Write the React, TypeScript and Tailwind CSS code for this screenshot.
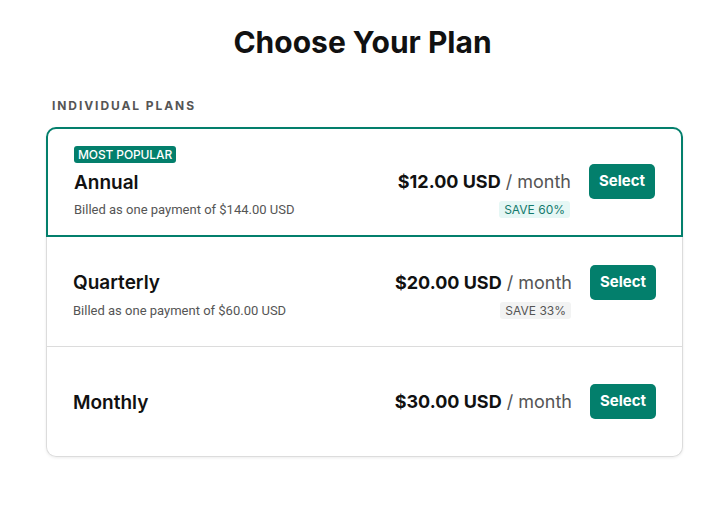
import React from 'react';

interface Plan {
  name: string;
  billed?: string;
  price: string;
  save?: string;
  popular?: boolean;
}

const plans: Plan[] = [
  { name: 'Annual', billed: 'Billed as one payment of $144.00 USD', price: '$12.00 USD', save: 'SAVE 60%', popular: true },
  { name: 'Quarterly', billed: 'Billed as one payment of $60.00 USD', price: '$20.00 USD', save: 'SAVE 33%' },
  { name: 'Monthly', price: '$30.00 USD' },
];

function PlanRow({ plan }: { plan: Plan }) {
  return (
    <div className="flex h-full items-center px-[26px]">
      <div className="flex w-full items-end justify-between">
        {/* Left: name + billing */}
        <div className="flex flex-col">
          {plan.popular && (
            <span className="mb-[1px] self-start rounded-[3px] bg-[#037f6c] px-[4px] text-[12px] font-medium leading-[17px] tracking-[-0.01em] text-white">
              MOST POPULAR
            </span>
          )}
          <div className="flex h-[35px] items-center pt-[3px] text-[19px] font-semibold text-[#111]">{plan.name}</div>
          {plan.billed && (
            <div className="mt-[2px] font-['Roboto',sans-serif] text-[13px] leading-[17px] text-[#555]">{plan.billed}</div>
          )}
        </div>

        {/* Right: price + select */}
        <div className="flex flex-col items-end">
          <div className="flex items-center gap-[18px]">
            <div className="text-[18px] text-[#111]">
              <span className="font-bold">{plan.price}</span>
              <span className="text-[#555]"> / month</span>
            </div>
            <button className="h-[35px] w-[66px] rounded-[5px] bg-[#037f6c] text-[15px] font-bold text-white">
              Select
            </button>
          </div>
          {plan.save && (
            <span
              className={`mt-[2px] mr-[85px] rounded-[3px] px-[5px] text-[12px] leading-[17px] ${
                plan.popular ? 'bg-[#e6f7f5] text-[#137a6d]' : 'bg-[#f2f3f3] text-[#555]'
              }`}
            >
              {plan.save}
            </span>
          )}
        </div>
      </div>
    </div>
  );
}

export default function App() {
  return (
    <div className="min-h-screen bg-white pt-[24px] font-['Inter',sans-serif]">
      <h1 className="text-center text-[30px] font-bold leading-[36px] text-[#111]">Choose Your Plan</h1>

      <div className="ml-[46px] mt-[38px] w-[637px]">
        <div className="pl-[6px] text-[12px] font-bold uppercase leading-[16px] tracking-[0.16em] text-[#555]">
          Individual Plans
        </div>

        <div className="mt-[13px] rounded-[10px] shadow-[0_1px_3px_rgba(0,0,0,0.08)]">
          <div className="h-[110px] rounded-t-[10px] border-2 border-[#037f6c]">
            <PlanRow plan={plans[0]} />
          </div>
          <div className="divide-y divide-[#dcdcdc] rounded-b-[10px] border border-t-0 border-[#dcdcdc]">
            <div className="h-[110px]">
              <PlanRow plan={plans[1]} />
            </div>
            <div className="h-[109px]">
              <PlanRow plan={plans[2]} />
            </div>
          </div>
        </div>
      </div>
    </div>
  );
}
